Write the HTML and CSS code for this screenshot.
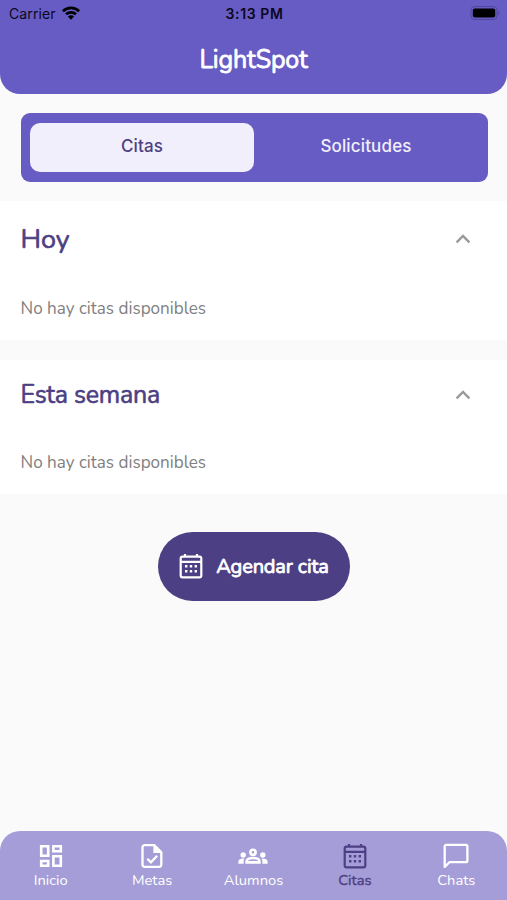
FILE: index.html
```html
<!DOCTYPE html>
<html lang="es">
<head>
    <meta charset="UTF-8">
    <meta name="viewport" content="width=device-width, initial-scale=1.0">
    <title>LightSpot</title>
    <link rel="stylesheet" href="styles.css">
</head>
<body>

    <!-- Calendar icon, used by the button and the nav -->
    <svg class="defs" width="0" height="0">
        <symbol id="calendar" viewBox="0 0 24 26">
            <rect x="1.7" y="3.7" width="20.6" height="20.6" rx="1.8" fill="none" stroke="currentColor" stroke-width="2.2"/>
            <path d="M6 1v3M18 1v3M2 8.8h20" fill="none" stroke="currentColor" stroke-width="2.2"/>
            <path d="M6 12h2.4v2.4H6zM10.8 12h2.4v2.4h-2.4zM15.6 12H18v2.4h-2.4zM6 17h2.4v2.4H6zM10.8 17h2.4v2.4h-2.4zM15.6 17H18v2.4h-2.4z" fill="currentColor"/>
        </symbol>
    </svg>

    <div class="app">
        <header class="header">
            <div class="status-bar">
                <div class="carrier">
                    <span>Carrier</span>
                    <svg width="18" height="14" viewBox="0 0 18 14" fill="none" stroke="#000" stroke-width="2.7">
                        <path d="M.9 5.2a11.6 11.6 0 0 1 16.2 0"/>
                        <path d="M4 8.3a7.2 7.2 0 0 1 10 0"/>
                        <path d="M9 13.7 5.9 10.6a4.4 4.4 0 0 1 6.2 0z" fill="#000" stroke="none"/>
                    </svg>
                </div>
                <span class="time">3:13 PM</span>
                <div class="battery">
                    <svg width="30" height="14" viewBox="0 0 30 14">
                        <rect x="1" y=".5" width="26" height="13" rx="3.6" fill="none" stroke="#50479a"/>
                        <rect x="2.8" y="2.6" width="22.4" height="8.8" rx="2"/>
                        <path d="M28.4 5v4.4q2-2.2 0-4.4z" fill="#50479a"/>
                    </svg>
                </div>
            </div>
            <h1>LightSpot</h1>
        </header>

        <div class="tabs">
            <button class="tab active">Citas</button>
            <button class="tab">Solicitudes</button>
        </div>

        <section class="section">
            <div class="section-head">
                <h2 class="today">Hoy</h2>
                <svg class="chevron" width="16" height="10" viewBox="0 0 16 10"><path d="M1.6 8.4 8 2l6.4 6.4"/></svg>
            </div>
            <p>No hay citas disponibles</p>
        </section>

        <section class="section week">
            <div class="section-head">
                <h2>Esta semana</h2>
                <svg class="chevron" width="16" height="10" viewBox="0 0 16 10"><path d="M1.6 8.4 8 2l6.4 6.4"/></svg>
            </div>
            <p>No hay citas disponibles</p>
        </section>

        <button class="schedule">
            <svg width="24" height="26"><use href="#calendar"/></svg>
            <span>Agendar cita</span>
        </button>

        <nav class="nav">
            <a class="nav-item">
                <svg width="26" height="26" viewBox="0 0 26 26" fill="none" stroke="currentColor" stroke-width="2.6">
                    <path d="M3.2 3.2h7v9.6h-7zM15.4 3.2h7.4v5h-7.4zM3.2 18h7v4.8h-7zM15.4 13.2h7.4v9.6h-7.4z"/>
                </svg>
                <span>Inicio</span>
            </a>
            <a class="nav-item">
                <svg width="26" height="26" viewBox="0 0 26 26" fill="none" stroke="currentColor" stroke-width="2.3">
                    <path d="M5.7 2.2h9.6l7 7v12.4a2.2 2.2 0 0 1-2.2 2.2H5.7a2.2 2.2 0 0 1-2.2-2.2V4.4a2.2 2.2 0 0 1 2.2-2.2z"/>
                    <path d="M14.4 1.2v8.9h8.4z" fill="currentColor" stroke="none"/>
                    <path d="m8.3 15.8 3.6 3.6 6.3-6.6"/>
                </svg>
                <span>Metas</span>
            </a>
            <a class="nav-item">
                <svg width="30" height="26" viewBox="0 0 30 26" fill="currentColor">
                    <path d="M8.6 19.4v-1.1c0-2.4 3.4-3.3 6.4-3.3s6.4.9 6.4 3.3v1.1z" fill="none" stroke="currentColor" stroke-width="2.6"/>
                    <circle cx="15" cy="9.3" r="2.6" fill="none" stroke="currentColor" stroke-width="2.6"/>
                    <circle cx="5.2" cy="12" r="2.7"/>
                    <circle cx="24.8" cy="12" r="2.7"/>
                    <path d="M.4 20.7v-2c0-2.4 2.4-3.4 6-3.2-.8 1.2-.9 2.4-.7 5.2zM29.6 20.7v-2c0-2.4-2.4-3.4-6-3.2.8 1.2.9 2.4.7 5.2z"/>
                </svg>
                <span>Alumnos</span>
            </a>
            <a class="nav-item active">
                <svg width="24" height="26"><use href="#calendar"/></svg>
                <span>Citas</span>
            </a>
            <a class="nav-item">
                <svg width="26" height="26" viewBox="0 0 26 26" fill="none" stroke="currentColor" stroke-width="2.3" stroke-linejoin="round">
                    <path d="M3 1.9h20a1.4 1.4 0 0 1 1.4 1.4v14.5a1.4 1.4 0 0 1-1.4 1.4H6.4l-4.7 4.7V3.3A1.4 1.4 0 0 1 3 1.9z"/>
                </svg>
                <span>Chats</span>
            </a>
        </nav>
    </div>

</body>
</html>
```

FILE: styles.css
```css
* {
    box-sizing: border-box;
}
body {
    margin: 0;
    background: #fafafa;
    font-family: Nunito, Lato, sans-serif;
}
h1, h2, p {
    margin: 0;
}
button {
    border: none;
    padding: 0;
    font-family: inherit;
    cursor: pointer;
}
.defs {
    display: block;
}
.app {
    display: flex;
    flex-direction: column;
    height: 900px;
}
.header {
    height: 94px;
    background: #675cc4;
    border-radius: 0 0 20px 20px;
}
.status-bar {
    display: grid;
    grid-template-columns: 1fr auto 1fr;
    align-items: center;
    height: 28px;
    padding: 0 7px 0 9px;
    font-family: Inter, sans-serif;
    font-size: 14px;
    color: #0b0820;
}
.carrier {
    display: flex;
    align-items: center;
    gap: 6px;
    letter-spacing: 0.1px;
}
.carrier span {
    margin-top: -1px;
}
.carrier svg {
    margin-top: -3px;
}
.time {
    margin-top: -1px;
    font-weight: 600;
    letter-spacing: 0.6px;
}
.battery {
    display: flex;
    justify-content: flex-end;
    margin-top: -2px;
}
.header h1 {
    margin-top: 16px;
    text-align: center;
    color: white;
    font-size: 25px;
    line-height: 32px;
    font-weight: 400;
    letter-spacing: -0.15px;
    -webkit-text-stroke: 0.8px white;
}
.tabs {
    display: flex;
    height: 69px;
    margin: 19px 19.5px 0 20.5px;
    padding: 10px 9.5px;
    background: #675cc4;
    border-radius: 9px;
}
.tab {
    flex: 1;
    background: none;
    border-radius: 10px;
    color: #f1effb;
    font-family: Inter, sans-serif;
    font-size: 17px;
    font-weight: 500;
    letter-spacing: 0.15px;
    padding-bottom: 3px;
}
.tab.active {
    background: #f1effb;
    color: #4d3f84;
}
.section {
    height: 139px;
    margin-top: 19px;
    padding: 0 36px 0 20.5px;
    background: white;
}
.section.week {
    height: 134px;
    margin-top: 20px;
}
.section-head {
    display: flex;
    justify-content: space-between;
    align-items: center;
    height: 76px;
}
.week .section-head {
    height: 70px;
}
.section h2 {
    color: #4d3f84;
    font-size: 25px;
    font-weight: 400;
    letter-spacing: -0.25px;
    -webkit-text-stroke: 0.6px #4d3f84;
}
.section h2.today {
    font-size: 27px;
    letter-spacing: 0;
}
.section p {
    margin-top: 20px;
    color: #808080;
    font-size: 17.1px;
    line-height: 24px;
}
.week p {
    margin-top: 21px;
}
.chevron path {
    fill: none;
    stroke: #999;
    stroke-width: 2.4;
}
.schedule {
    display: flex;
    align-items: center;
    justify-content: center;
    align-self: center;
    gap: 13px;
    width: 192px;
    height: 69px;
    margin-top: 38px;
    padding-left: 1px;
    background: #4d3f84;
    border-radius: 35px;
    color: white;
    font-size: 20px;
    font-weight: 400;
    letter-spacing: -0.15px;
    -webkit-text-stroke: 0.8px white;
}
.schedule svg {
    margin-top: -1px;
}
.nav {
    display: grid;
    grid-template-columns: repeat(5, 1fr);
    height: 69px;
    margin-top: auto;
    padding-top: 12px;
    background: #a59dd7;
    border-radius: 20px 20px 0 0;
}
.nav-item {
    display: flex;
    flex-direction: column;
    align-items: center;
    color: white;
    font-size: 14.7px;
    line-height: 20px;
}
.nav-item span {
    margin-top: 1px;
}
.nav-item.active {
    color: #4d3f84;
    -webkit-text-stroke: 0.4px #4d3f84;
}
```
